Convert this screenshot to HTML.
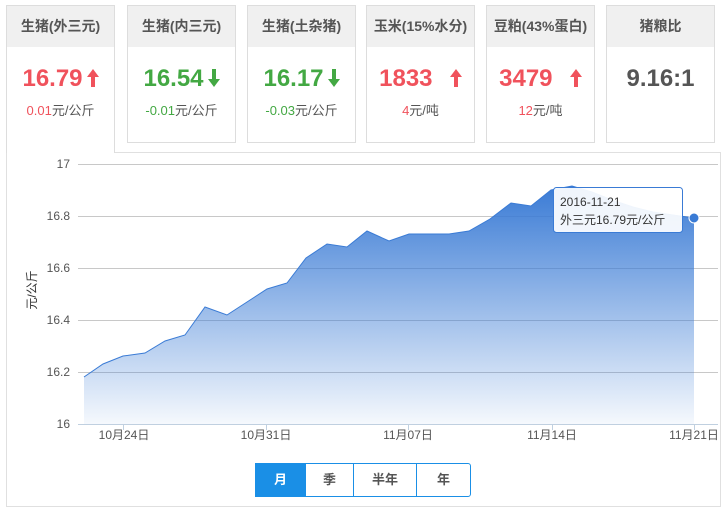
<!DOCTYPE html><html><head><meta charset="utf-8"><style>
body{margin:0;width:726px;height:511px;background:#fff;font-family:"Liberation Sans","Noto Sans CJK SC",sans-serif;position:relative;overflow:hidden}
.card{position:absolute;top:5px;width:107px;height:136px;border:1px solid #ddd;background:#fff;text-align:center}
.card .h{height:41px;background:#f0f0f0;line-height:41px;font-size:14px;font-weight:bold;color:#555}
.card .v{font-size:24px;font-weight:bold;margin-top:17px;line-height:30px}
.card .s{font-size:13px;color:#555;margin-top:6px}
.r{color:#f0525c}.g{color:#43a843}
.panel{position:absolute;left:6px;top:152px;width:713px;height:353px;border:1px solid #e0e0e0}
.btns{position:absolute;left:255px;top:463px;height:32px;border:1px solid #1a8fe6;border-radius:0 3px 3px 0;display:flex;font-size:13px;font-weight:bold;color:#555}
.btns div{line-height:32px;text-align:center;border-left:1px solid #1a8fe6}
svg.a{vertical-align:-1px;margin-left:4px}
</style></head><body>
<div class="panel"></div>
<div class="card" style="left:6px;height:147px;border-bottom:none"><div class="h">生猪(外三元)</div><div class="v r">16.79<svg class="a" width="12" height="18" viewBox="0 0 12 18"><path d="M6,0 L12,8 H8 V18 H4 V8 H0Z" fill="#f0525c"/></svg></div><div class="s"><span class="r">0.01</span>元/公斤</div></div>
<div class="card" style="left:127px"><div class="h">生猪(内三元)</div><div class="v g">16.54<svg class="a" width="12" height="18" viewBox="0 0 12 18"><path d="M6,18 L12,10 H8 V0 H4 V10 H0Z" fill="#43a843"/></svg></div><div class="s"><span class="g">-0.01</span>元/公斤</div></div>
<div class="card" style="left:247px"><div class="h">生猪(土杂猪)</div><div class="v g">16.17<svg class="a" width="12" height="18" viewBox="0 0 12 18"><path d="M6,18 L12,10 H8 V0 H4 V10 H0Z" fill="#43a843"/></svg></div><div class="s"><span class="g">-0.03</span>元/公斤</div></div>
<div class="card" style="left:366px"><div class="h">玉米(15%水分)</div><div class="v r">1833 &nbsp;<svg class="a" width="12" height="18" viewBox="0 0 12 18"><path d="M6,0 L12,8 H8 V18 H4 V8 H0Z" fill="#f0525c"/></svg></div><div class="s"><span class="r">4</span>元/吨</div></div>
<div class="card" style="left:486px"><div class="h">豆粕(43%蛋白)</div><div class="v r">3479 &nbsp;<svg class="a" width="12" height="18" viewBox="0 0 12 18"><path d="M6,0 L12,8 H8 V18 H4 V8 H0Z" fill="#f0525c"/></svg></div><div class="s"><span class="r">12</span>元/吨</div></div>
<div class="card" style="left:606px"><div class="h">猪粮比</div><div class="v" style="color:#555">9.16:1</div></div>
<svg style="position:absolute;left:0;top:0" width="726" height="511">
<defs><linearGradient id="gr" x1="0" y1="0" x2="0" y2="1"><stop offset="0" stop-color="#3a7bd5"/><stop offset="1" stop-color="#3a7bd5" stop-opacity="0.05"/></linearGradient></defs>
<g stroke="#c8c8c8" stroke-width="1">
<line x1="78" y1="164.5" x2="718" y2="164.5"/><line x1="78" y1="216.5" x2="718" y2="216.5"/><line x1="78" y1="268.5" x2="718" y2="268.5"/><line x1="78" y1="320.5" x2="718" y2="320.5"/><line x1="78" y1="372.5" x2="718" y2="372.5"/></g>
<g font-size="12" fill="#555" text-anchor="end"><text x="70" y="168">17</text><text x="70" y="220">16.8</text><text x="70" y="272">16.6</text><text x="70" y="324">16.4</text><text x="70" y="376">16.2</text><text x="70" y="428">16</text></g>
<text x="36" y="290" font-size="12" fill="#333" transform="rotate(-90 36 290)" text-anchor="middle">元/公斤</text>
<path d="M84,377 L103,364 123,356 145,353 165,341 185,335 205,307 227,315 247,302 267,289 287,283 306,258 327,244 347,247 367,231 389,241 409,234 429,234 449,234 469,231 490,219 511,203 531,206 551,190 572,186 592,192 612,200 633,207 653,212 673,215 694,218 L694,424 L84,424Z" fill="url(#gr)"/>
<path d="M84,377 L103,364 123,356 145,353 165,341 185,335 205,307 227,315 247,302 267,289 287,283 306,258 327,244 347,247 367,231 389,241 409,234 429,234 449,234 469,231 490,219 511,203 531,206 551,190 572,186 592,192 612,200 633,207 653,212 673,215 694,218" fill="none" stroke="#3a7bd5" stroke-width="1"/>
<line x1="78" y1="424.5" x2="718" y2="424.5" stroke="#c0d0e0"/>
<g stroke="#c0d0e0"><line x1="123.5" y1="424" x2="123.5" y2="430"/><line x1="266.5" y1="424" x2="266.5" y2="430"/><line x1="408.5" y1="424" x2="408.5" y2="430"/><line x1="552.5" y1="424" x2="552.5" y2="430"/><line x1="694.5" y1="424" x2="694.5" y2="430"/></g>
<g font-size="12" fill="#555" text-anchor="middle"><text x="124" y="439">10月24日</text><text x="266" y="439">10月31日</text><text x="408" y="439">11月07日</text><text x="552" y="439">11月14日</text><text x="694" y="439">11月21日</text></g>
<circle cx="694" cy="218" r="5" fill="#3a7bd5" stroke="#fff" stroke-width="1"/>
<rect x="553.5" y="187.5" width="129" height="45" rx="3" fill="#fff" fill-opacity="0.92" stroke="#3a7bd5"/>
<text x="560" y="206" font-size="12" fill="#333">2016-11-21</text><text x="560" y="224" font-size="12" fill="#333">外三元16.79元/公斤</text>
</svg>
<div class="btns"><div style="width:49px;background:#1a8fe6;color:#fff;border:none">月</div><div style="width:47px">季</div><div style="width:62px">半年</div><div style="width:53px">年</div></div>
</body></html>
